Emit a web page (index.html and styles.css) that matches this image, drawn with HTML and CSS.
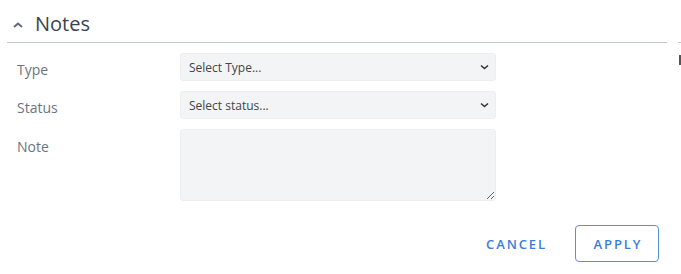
FILE: index.html
```html
<!DOCTYPE html>
<html lang="en">
  <head>
    <meta charset="UTF-8" />
    <meta name="viewport" content="width=device-width, initial-scale=1.0" />
    <title>Notes</title>
    <link rel="stylesheet" href="styles.css">
  </head>
  <body>
    <div class="layout">
      <section class="panel">
        <div class="panel-header">
          <svg class="chevron" width="10" height="6" viewBox="0 0 10 6">
            <path d="M1 5 L5 1.5 L9 5" fill="none" stroke="#5f6b7a" stroke-width="2" />
          </svg>
          <h2>Notes</h2>
        </div>

        <form class="notes-form">
          <label class="field-label" for="type">Type</label>
          <div class="select-wrap">
            <select id="type">
              <option>Select Type...</option>
            </select>
            <svg class="select-arrow" width="9" height="6" viewBox="0 0 9 6">
              <path d="M1 1.5 L4.5 4.5 L8 1.5" fill="none" stroke="#333" stroke-width="1.6" />
            </svg>
          </div>

          <label class="field-label" for="status">Status</label>
          <div class="select-wrap">
            <select id="status">
              <option>Select status...</option>
            </select>
            <svg class="select-arrow" width="9" height="6" viewBox="0 0 9 6">
              <path d="M1 1.5 L4.5 4.5 L8 1.5" fill="none" stroke="#333" stroke-width="1.6" />
            </svg>
          </div>

          <label class="field-label note-label" for="note">Note</label>
          <textarea id="note"></textarea>
        </form>

        <div class="actions">
          <button type="button" class="btn btn-text">Cancel</button>
          <button type="button" class="btn btn-outline">Apply</button>
        </div>
      </section>

      <aside class="side">
        <div class="side-line"></div>
        <div class="side-tick"></div>
      </aside>
    </div>
  </body>
</html>
```

FILE: styles.css
```css
* {
  box-sizing: border-box;
  margin: 0;
  padding: 0;
}

body {
  background: #fff;
  font-family: "Open Sans", sans-serif;
  color: #3a4350;
}

.layout {
  display: flex;
  gap: 11px;
  padding-left: 7px;
}

.panel {
  width: 661px;
}

.panel-header {
  display: flex;
  align-items: center;
  gap: 12px;
  padding: 10px 0 4px 6px;
  border-bottom: 1px solid #c3c8ce;
}

.chevron {
  display: block;
  margin-top: 1px;
}

.panel-header h2 {
  font-size: 20px;
  font-weight: 400;
  line-height: 28px;
  color: #3a4350;
}

.notes-form {
  display: grid;
  grid-template-columns: 163px 316px;
  row-gap: 10px;
  padding: 10px 0 0 10px;
}

.field-label {
  font-size: 14px;
  line-height: 23px;
  padding-top: 5px;
  color: #6b7480;
}

.note-label {
  padding-top: 6px;
}

.select-wrap {
  position: relative;
}

select,
textarea {
  display: block;
  width: 100%;
  background: #f3f4f6;
  border: 1px solid #eceef0;
  border-radius: 3px;
  font-family: "Open Sans", sans-serif;
  font-size: 12px;
  color: #444;
}

select {
  height: 28px;
  padding: 0 24px 0 8px;
  appearance: none;
  -webkit-appearance: none;
}

.select-arrow {
  position: absolute;
  right: 7px;
  top: 11px;
  pointer-events: none;
}

textarea {
  height: 72px;
  resize: vertical;
}

.actions {
  display: flex;
  justify-content: flex-end;
  align-items: center;
  gap: 13px;
  padding: 24px 8px 0 0;
}

.btn {
  font-family: "Open Sans", sans-serif;
  font-size: 13px;
  font-weight: 600;
  letter-spacing: 1.9px;
  text-transform: uppercase;
  color: #3b7dd8;
  background: transparent;
  border-radius: 4px;
  height: 37px;
  cursor: pointer;
}

.btn-text {
  border: 1px solid transparent;
  padding: 0 14px 0 16px;
}

.btn-outline {
  border: 1px solid #5590e0;
  padding: 0 14px 0 16px;
  width: 84px;
}

.side {
  width: 3px;
  padding-top: 42px;
}

.side-line {
  height: 1px;
  background: #c3c8ce;
}

.side-tick {
  width: 2px;
  height: 10px;
  margin: 12px 0 0 1px;
  background: #555;
}
```
